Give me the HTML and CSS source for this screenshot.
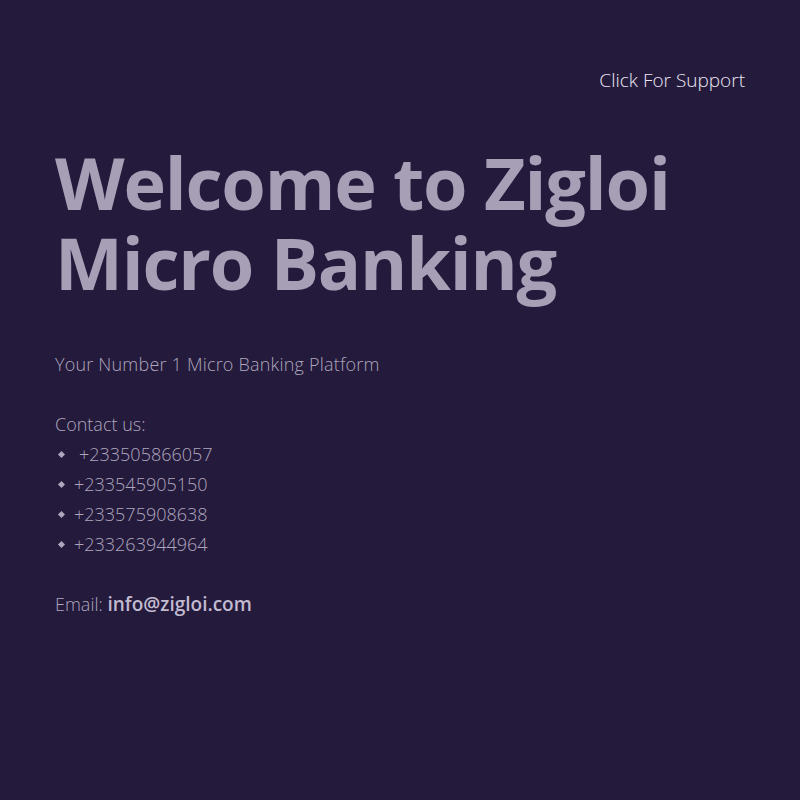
FILE: index.html
```html
<!DOCTYPE html>
<html lang="en">
<head>
<meta charset="utf-8">
<title>Zigloi Micro Banking</title>
<link rel="stylesheet" href="styles.css">
</head>
<body>
<div class="page">
  <header class="topbar">
    <a class="support" href="#">Click For Support</a>
  </header>
  <main class="hero">
    <h1 class="title">Welcome to Zigloi Micro Banking</h1>
    <p class="tagline">Your Number 1 Micro Banking Platform</p>
    <div class="contact">
      <p class="contact-label">Contact us:</p>
      <ul class="phones">
        <li class="phone first">+233505866057</li>
        <li class="phone">+233545905150</li>
        <li class="phone">+233575908638</li>
        <li class="phone">+233263944964</li>
      </ul>
    </div>
    <p class="email">Email: <span class="email-addr">info@zigloi.com</span></p>
  </main>
</div>
</body>
</html>
```

FILE: styles.css
```css
html, body {
  margin: 0;
  padding: 0;
  background: #241a3c;
}
body {
  font-family: "Open Sans", "Noto Sans", sans-serif;
  color: #aea6bd;
}
.page {
  min-height: 800px;
  display: flex;
  flex-direction: column;
  padding: 0 55px;
}
.topbar {
  display: flex;
  justify-content: flex-end;
  padding-top: 66px;
}
.support {
  color: #ece6f4;
  text-decoration: none;
  font-size: 19px;
  font-weight: 300;
  line-height: 28px;
}
.hero {
  display: flex;
  flex-direction: column;
  padding-top: 48px;
}
.title {
  margin: 0;
  font-size: 72px;
  line-height: 80px;
  font-weight: 700;
  color: #a79fb6;
  letter-spacing: -1.2px;
  max-width: 680px;
}
.tagline {
  margin: 47px 0 0;
  font-size: 18px;
  line-height: 30px;
  font-weight: 300;
  letter-spacing: 0.2px;
}
.contact {
  margin-top: 30px;
}
.contact-label {
  margin: 0;
  font-size: 18px;
  line-height: 30px;
  font-weight: 300;
}
.phones {
  margin: 0;
  padding: 0;
  list-style: none;
  font-size: 18px;
  line-height: 30px;
  font-weight: 300;
}
.phone::before {
  content: "";
  display: inline-block;
  width: 5px;
  height: 5px;
  background: #aea6bd;
  transform: rotate(45deg);
  margin: 0 10px 4px 4px;
}
.phone.first::before {
  margin-right: 15px;
}
.email {
  margin: 30px 0 0;
  font-size: 18px;
  line-height: 30px;
  font-weight: 300;
}
.email-addr {
  font-weight: 600;
  font-size: 19px;
  color: #c2bbd0;
}
```
